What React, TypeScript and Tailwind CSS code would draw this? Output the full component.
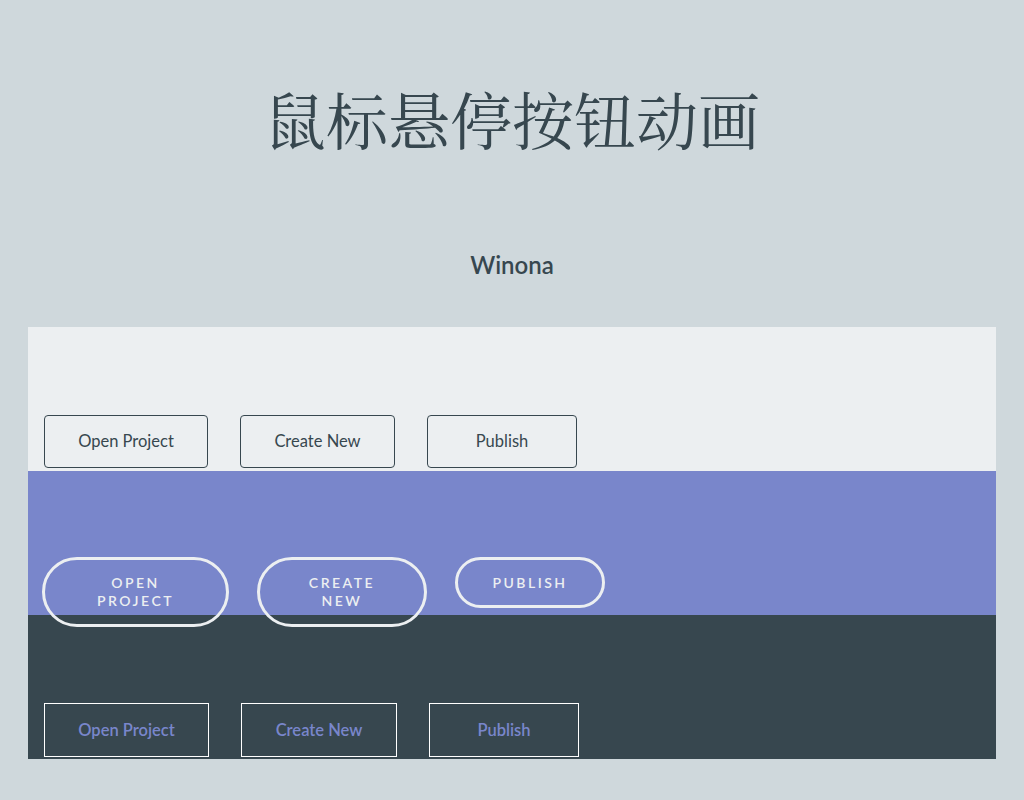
import React from "react";

const sans = "font-['Lato','Open_Sans','Noto_Sans',sans-serif]";

function PlainButton({ label, width }: { label: string; width: string }) {
  return (
    <button
      className={`${width} h-[53px] shrink-0 border border-[#37474f] rounded-[4px] text-[16.5px] text-[#37474f] ${sans}`}
    >
      {label}
    </button>
  );
}

function WinonaButton({ lines, width, height }: { lines: string[]; width: string; height: string }) {
  return (
    <button
      className={`${width} ${height} shrink-0 relative z-10 flex flex-col items-center justify-center border-[3px] border-[#eceff1] rounded-[40px] text-[14px] leading-[18px] font-semibold uppercase tracking-[2.5px] text-[#eceff1] ${sans}`}
    >
      {lines.map((l) => (
        <span key={l} className="block">
          {l}
        </span>
      ))}
    </button>
  );
}

function OutlineButton({ label, width }: { label: string; width: string }) {
  return (
    <button
      className={`${width} h-[54px] shrink-0 border border-white text-[16.5px] font-semibold text-[#7986cb] ${sans}`}
    >
      {label}
    </button>
  );
}

export default function App() {
  return (
    <div className="min-h-screen bg-[#cfd8dc] pb-10">
      {/* Header */}
      <header className="pt-[88px] text-center">
        <h1 className="text-[62px] leading-none text-[#37474f] font-['Noto_Serif_CJK_SC','Noto_Serif_CJK_JP','Noto_Sans_CJK_SC',serif]">
          鼠标悬停按钮动画
        </h1>
        <h2 className={`mt-[99px] text-[24px] leading-[32px] font-semibold text-[#37474f] ${sans}`}>
          Winona
        </h2>
      </header>

      {/* Demo panel */}
      <div className="mx-[28px] mt-[46px]">
        <div className="h-[144px] bg-[#eceff1] pt-[88px] pl-4 flex gap-8 items-start">
          <PlainButton label="Open Project" width="w-[164px]" />
          <PlainButton label="Create New" width="w-[155px]" />
          <PlainButton label="Publish" width="w-[150px]" />
        </div>
        <div className="h-[144px] bg-[#7986cb] pt-[86px] pl-[14px] flex gap-[28px] items-start">
          <WinonaButton lines={["Open", "Project"]} width="w-[187px]" height="h-[70px]" />
          <WinonaButton lines={["Create", "New"]} width="w-[170px]" height="h-[70px]" />
          <WinonaButton lines={["Publish"]} width="w-[150px]" height="h-[51px]" />
        </div>
        <div className="h-[144px] bg-[#37474f] pt-[88px] pl-4 flex gap-8 items-start">
          <OutlineButton label="Open Project" width="w-[165px]" />
          <OutlineButton label="Create New" width="w-[156px]" />
          <OutlineButton label="Publish" width="w-[150px]" />
        </div>
      </div>
    </div>
  );
}
